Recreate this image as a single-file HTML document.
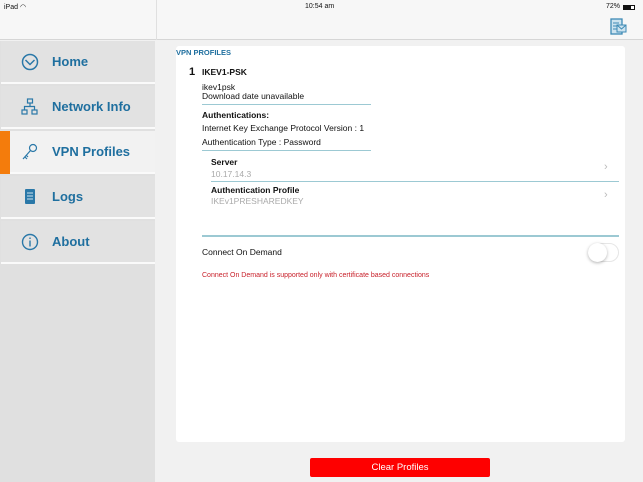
<!DOCTYPE html>
<html><head><style>
*{margin:0;padding:0;box-sizing:border-box}
body{width:643px;height:482px;overflow:hidden;background:#f1f1f1;font-family:"Liberation Sans",Arial,sans-serif;position:relative;color:#111}
.abs{position:absolute}
.top{left:0;top:0;width:643px;height:40px;background:#f7f7f7;border-bottom:1px solid #d6d6d6}
.side{left:0;top:41px;width:155px;height:441px;background:#e0e0e0}
.item{position:absolute;left:1px;width:154px;height:43px;background:#e2e2e2;border-bottom:2px solid #fafafa}
.item span{position:absolute;left:51px;top:13px;font-size:13px;font-weight:bold;color:#1f6f9f}
.item svg{position:absolute;left:20px;top:12px}
.card{left:176px;top:46px;width:449px;height:396px;background:#fff;border-radius:3px}
.t{position:absolute;font-size:8.5px;white-space:nowrap}
.line{position:absolute;height:1px;background:#9cc9d3}
</style></head><body>
<div class="abs top"></div>
<div class="abs" style="left:156px;top:0;width:1px;height:40px;background:#e0e0e0"></div>
<div class="t" style="left:4px;top:3px;font-size:7px">iPad ◠</div>
<div class="t" style="left:305px;top:3px;font-size:7px">10:54 am</div>
<div class="t" style="left:606px;top:3px;font-size:7px">72%</div>
<div class="abs" style="left:623px;top:5px;width:12px;height:5px;border:1px solid #111;background:linear-gradient(90deg,#111 72%,#fff 72%)"></div>
<svg class="abs" style="left:610px;top:18px" width="17" height="18" viewBox="0 0 17 18"><rect x="1" y="1" width="11" height="15" fill="#cde3ef" stroke="#3d8ab5" stroke-width="1.3"/><path d="M3 5h6M3 8h6M3 11h6" stroke="#3d8ab5"/><rect x="7" y="7" width="9" height="7" fill="#cde3ef" stroke="#3d8ab5"/><path d="M7 7l4.5 4 4.5-4" fill="none" stroke="#3d8ab5"/></svg>
<div class="abs side"></div>
<div class="item" style="top:41px"><svg width="18" height="18" viewBox="0 0 18 18"><circle cx="9" cy="9" r="7.5" fill="none" stroke="#2a78a8" stroke-width="1.5"/><path d="M4.5 7l4.5 4.5 4.5-4.5" fill="none" stroke="#2a78a8" stroke-width="1.5"/></svg><span>Home</span></div>
<div class="item" style="top:86px"><svg width="18" height="18" viewBox="0 0 18 18" fill="none" stroke="#2a78a8" stroke-width="1.2"><rect x="6.5" y="1" width="5" height="4"/><rect x="1" y="12" width="5" height="4"/><rect x="11" y="12" width="5" height="4"/><path d="M9 5v3.5M3.5 12V8.5h10V12"/></svg><span>Network Info</span></div>
<div class="item" style="top:131px;background:#f2f2f2"><div class="abs" style="left:-1px;top:0;width:10px;height:43px;background:#f47c0c"></div><svg width="18" height="18" viewBox="0 0 18 18" fill="none" stroke="#2a78a8" stroke-width="1.2"><circle cx="12" cy="5" r="3.5"/><path d="M9.5 7.5L2 16M4 14l2 2M5.5 12.5l1.5 1.5"/></svg><span>VPN Profiles</span></div>
<div class="item" style="top:176px"><svg width="18" height="18" viewBox="0 0 18 18"><rect x="4" y="1" width="10" height="15" rx="1" fill="#2a78a8"/><path d="M6 5h6M6 8h6M6 11h6" stroke="#cde3ef"/></svg><span>Logs</span></div>
<div class="item" style="top:221px"><svg width="18" height="18" viewBox="0 0 18 18" fill="none" stroke="#2a78a8" stroke-width="1.4"><circle cx="9" cy="9" r="7.5"/><path d="M9 7.5v6M9 4.5v1.5"/></svg><span>About</span></div>
<div class="abs card"></div>
<div class="t" style="left:176px;top:48px;color:#1f6f9f;font-weight:bold;font-size:7.5px">VPN PROFILES</div>
<div class="t" style="left:189px;top:66px;font-size:11px;font-weight:bold">1</div>
<div class="t" style="left:202px;top:67px;font-weight:bold">IKEV1-PSK</div>
<div class="t" style="left:202px;top:82px">ikev1psk</div>
<div class="t" style="left:202px;top:91px">Download date unavailable</div>
<div class="line" style="left:202px;top:104px;width:169px"></div>
<div class="t" style="left:202px;top:110px;font-weight:bold">Authentications:</div>
<div class="t" style="left:202px;top:123px">Internet Key Exchange Protocol Version : 1</div>
<div class="t" style="left:202px;top:137px">Authentication Type : Password</div>
<div class="line" style="left:202px;top:150px;width:169px"></div>
<div class="t" style="left:211px;top:157px;font-weight:bold">Server</div>
<div class="t" style="left:211px;top:169px;color:#aaa">10.17.14.3</div>
<div class="t" style="left:604px;top:161px;color:#bbb;font-size:11px">›</div>
<div class="line" style="left:211px;top:181px;width:408px"></div>
<div class="t" style="left:211px;top:185px;font-weight:bold">Authentication Profile</div>
<div class="t" style="left:211px;top:196px;color:#aaa">IKEv1PRESHAREDKEY</div>
<div class="t" style="left:604px;top:189px;color:#bbb;font-size:11px">›</div>
<div class="line" style="left:202px;top:235px;width:417px;height:2px"></div>
<div class="t" style="left:202px;top:247px">Connect On Demand</div>
<div class="abs" style="left:588px;top:243px;width:31px;height:19px;border-radius:10px;border:1px solid #e6e6e6;background:#fff"></div>
<div class="abs" style="left:588px;top:243px;width:19px;height:19px;border-radius:50%;background:#fff;box-shadow:0 1px 3px rgba(0,0,0,.3)"></div>
<div class="t" style="left:202px;top:272px;color:#c8202a;font-size:7px">Connect On Demand is supported only with certificate based connections</div>
<div class="abs" style="left:310px;top:458px;width:180px;height:19px;background:#fe0000;border-radius:2px;color:#fff;font-size:9.5px;text-align:center;line-height:19px">Clear Profiles</div>
</body></html>
